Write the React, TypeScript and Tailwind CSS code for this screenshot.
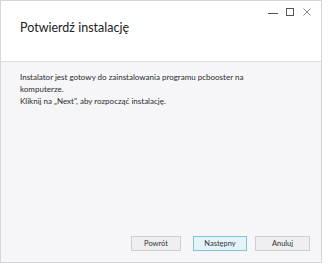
export default function App() {
  return (
    <div className="w-[328px] h-[264px] bg-white" style={{ fontFamily: 'Lato, "Noto Sans", sans-serif' }}>
      <div className="w-[322px] h-[263px] border border-[#d6d6d6] flex flex-col">
        <div className="h-[61px] bg-white border-b border-[#dcdcdc] relative shrink-0">
          <div className="absolute right-[10px] top-[7px] flex items-center">
            <svg width="10" height="8" viewBox="0 0 10 8">
              <path d="M0 5.5H10" stroke="#555" strokeWidth="1" />
            </svg>
            <svg width="8" height="8" viewBox="0 0 8 8" className="ml-[8px]">
              <rect x="0.5" y="0.5" width="7" height="7" fill="none" stroke="#555" strokeWidth="1" />
            </svg>
            <svg width="8" height="8" viewBox="0 0 8 8" className="ml-[9px]">
              <path d="M0.5 0.5L7.5 7.5M7.5 0.5L0.5 7.5" stroke="#777" strokeWidth="0.9" />
            </svg>
          </div>
          <div className="pl-[19px] pt-[17px] text-[12.5px] leading-[20px] text-[#222]">Potwierdź instalację</div>
        </div>
        <div className="flex-1 bg-[#f6f6f8] flex flex-col">
          <div className="pl-[19px] pt-[9px] text-[8px] leading-[12px] text-[#2a2a2a]">
            <p>Instalator jest gotowy do zainstalowania programu pcbooster na</p>
            <p>komputerze.</p>
            <p>Kliknij na „Next", aby rozpocząć instalację.</p>
          </div>
          <div className="mt-auto mb-[11px] mr-[11px] flex justify-end text-[7.5px] text-[#333]">
            <button className="w-[50px] h-[15px] bg-[#efefef] border border-[#cfcfcf]">Powrót</button>
            <button className="w-[54px] h-[15px] bg-[#e3f3f8] border border-[#7fc7d8] ml-[12px]">Następny</button>
            <button className="w-[55px] h-[15px] bg-[#efefef] border border-[#cfcfcf] ml-[8px]">Anuluj</button>
          </div>
        </div>
      </div>
    </div>
  );
}
